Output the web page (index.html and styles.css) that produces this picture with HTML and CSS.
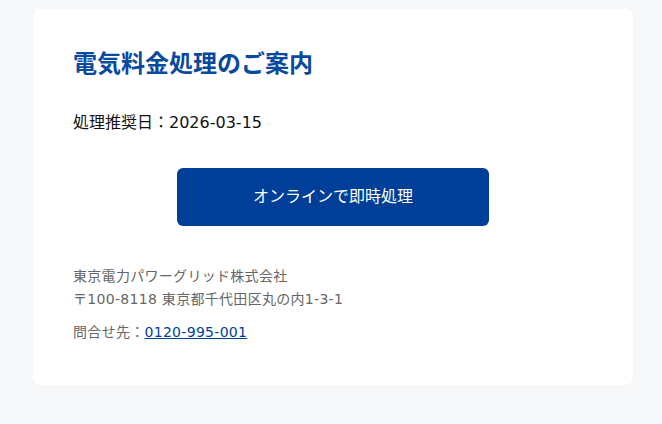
FILE: index.html
```html
<!DOCTYPE html>
<html lang="ja">
<head>
<meta charset="utf-8">
<title>電気料金処理のご案内</title>
<link rel="stylesheet" href="styles.css">
</head>
<body>
<div class="page">
  <div class="card">
    <h1 class="title">電気料金処理のご案内</h1>
    <p class="date">処理推奨日：2026-03-15</p>
    <div class="actions">
      <span class="button">オンラインで即時処理</span>
    </div>
    <div class="footer">
      <p class="company">東京電力パワーグリッド株式会社<br>〒100-8118 東京都千代田区丸の内1-3-1</p>
      <p class="contact">問合せ先：<span class="link">0120-995-001</span></p>
    </div>
  </div>
</div>
</body>
</html>
```

FILE: styles.css
```css
html, body {
  margin: 0;
  padding: 0;
  background: #f7f8fa;
}
body {
  font-family: "DejaVu Sans", "Noto Sans CJK JP", sans-serif;
}
.page {
  padding: 9px 29px 40px 33px;
}
.card {
  width: 600px;
  box-sizing: border-box;
  background: #ffffff;
  border-radius: 8px;
  padding: 40px 40px 41px 40px;
}
.title {
  margin: 0;
  font-size: 24px;
  line-height: 31px;
  font-weight: 700;
  color: #0a4a9e;
}
.date {
  margin: 30px 0 0 0;
  font-size: 16px;
  line-height: 26px;
  color: #111111;
}
.actions {
  display: flex;
  justify-content: center;
  margin-top: 32px;
}
.button {
  display: block;
  width: 312px;
  height: 58px;
  line-height: 58px;
  text-align: center;
  background: #003f98;
  color: #ffffff;
  font-size: 16px;
  border-radius: 6px;
}
.footer {
  margin-top: 39px;
  font-size: 14px;
  line-height: 23px;
  letter-spacing: 0.3px;
  color: #666666;
}
.company {
  margin: 0;
}
.contact {
  margin: 10px 0 0 0;
}
.link {
  color: #003f98;
  text-decoration: underline;
}
```
